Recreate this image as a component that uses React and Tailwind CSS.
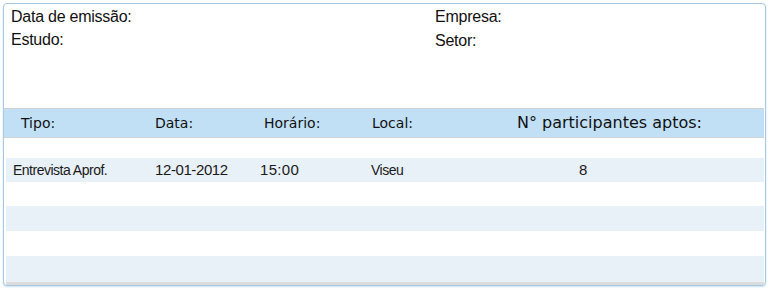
export default function App() {
  const sans = { fontFamily: '"Liberation Sans", Arial, sans-serif' };
  const dv = { fontFamily: '"DejaVu Sans", Verdana, sans-serif' };
  const rowCls = "h-[24px] flex items-center text-[14px] tracking-[-0.5px] text-[#1a1a1a]";
  return (
    <div className="w-[769px] h-[290px] bg-white pt-[3px] pl-[3px]" style={sans}>
      <div className="w-[763px] h-[283px] border border-[#a6c9e6] rounded-[4px] shadow-[0_1px_2px_rgba(150,190,220,0.5)] flex flex-col overflow-hidden bg-white">
        {/* info area */}
        <div className="h-[104px] flex pt-[1px] text-[16px] leading-[23px] tracking-[-0.25px] text-[#111]">
          <div className="w-[430px] pl-[7px] flex flex-col">
            <span>Data de emissão:</span>
            <span>Estudo:</span>
          </div>
          <div className="flex flex-col pl-[1px]">
            <span>Empresa:</span>
            <span className="pt-[1px]">Setor:</span>
          </div>
        </div>
        {/* header */}
        <div
          className="h-[30px] mr-[1px] bg-[#c1e0f6] border-y border-[#d2d2d2] flex items-baseline pt-[4px] pl-[17px] leading-[20px] text-[#111]"
          style={dv}
        >
          <span className="w-[134px] text-[14px]">Tipo:</span>
          <span className="w-[109px] text-[14px]">Data:</span>
          <span className="w-[108px] text-[14px]">Horário:</span>
          <span className="w-[145px] text-[14px]">Local:</span>
          <span className="text-[16px]">N° participantes aptos:</span>
        </div>
        {/* rows */}
        <div className="flex-1 flex flex-col ml-[2px] mr-[1px] border-b-[3px] border-[#dcdcdc]">
          <div className="h-[20px] bg-white"></div>
          <div className={rowCls + " bg-[#e8f0f8] pl-[7px]"}>
            <span className="w-[142px]">Entrevista Aprof.</span>
            <span className="w-[105px] text-[15px] tracking-[-0.4px]">12-01-2012</span>
            <span className="w-[111px] text-[15px] tracking-[0.3px]">15:00</span>
            <span className="w-[208px]">Viseu</span>
            <span className="text-[15px]">8</span>
          </div>
          <div className="h-[24px] bg-white"></div>
          <div className="h-[25px] bg-[#e8f0f8]"></div>
          <div className="h-[25px] bg-white"></div>
          <div className="flex-1 bg-[#e8f0f8]"></div>
        </div>
      </div>
    </div>
  );
}
